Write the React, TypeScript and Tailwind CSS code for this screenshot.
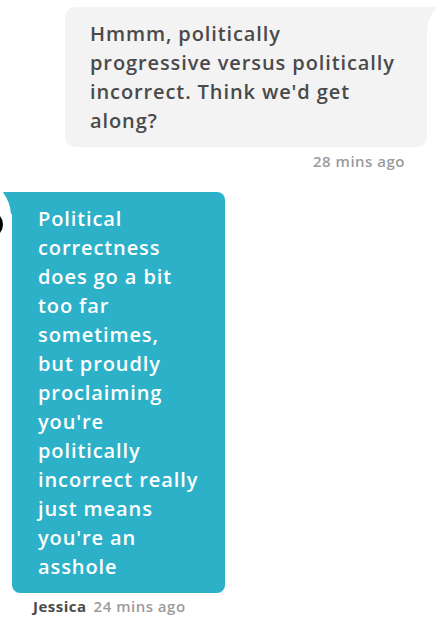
import React from "react";

const grayLines = [
  "Hmmm, politically",
  "progressive versus politically",
  "incorrect. Think we'd get",
  "along?",
];

const tealLines = [
  "Political",
  "correctness",
  "does go a bit",
  "too far",
  "sometimes,",
  "but proudly",
  "proclaiming",
  "you're",
  "politically",
  "incorrect really",
  "just means",
  "you're an",
  "asshole",
];

export default function App() {
  return (
    <div
      className="relative w-[445px] h-[628px] bg-white overflow-hidden"
      style={{ fontFamily: "'Open Sans', 'Noto Sans', sans-serif" }}
    >
      {/* outgoing message */}
      <div className="pt-[7px] pl-[65px]">
        <div className="relative w-[362px] h-[140px] bg-[#f3f3f3] rounded-l-[10px] rounded-br-[10px] pl-[25px] pt-[12px]">
          <svg
            className="absolute right-[-10px] top-0"
            width="12"
            height="22"
            viewBox="0 0 12 22"
          >
            <path d="M0 0 H10 Q11 0 10.5 2 Q3 10 2 22 H0 Z" fill="#f3f3f3" />
          </svg>
          {grayLines.map((l) => (
            <div
              key={l}
              className="whitespace-nowrap text-[20px] leading-[29px] font-semibold tracking-[0.9px] text-[#4a4a4a]"
            >
              {l}
            </div>
          ))}
        </div>
      </div>
      <div className="w-[405px] text-right mt-[4px] text-[15px] leading-[20px] font-semibold tracking-[0.5px] text-[#9b9b9b]">
        28 mins ago
      </div>

      {/* avatar edge */}
      <div className="absolute left-[-24px] top-[211px] w-[27px] h-[27px] rounded-full border-[3px] border-black" />

      {/* incoming message */}
      <div className="pl-[12px] mt-[21px]">
        <div className="relative w-[213px] h-[401px] bg-[#2cb1c8] rounded-r-[8px] rounded-bl-[8px] pl-[26px] pt-[12px]">
          <svg
            className="absolute left-[-9px] top-0"
            width="10"
            height="22"
            viewBox="0 0 10 22"
          >
            <path d="M10 0 H1 Q-0.5 0 1 2 Q7 10 8 22 H10 Z" fill="#2cb1c8" />
          </svg>
          {tealLines.map((l, i) => (
            <div
              key={i}
              className="whitespace-nowrap text-[20px] leading-[29px] font-semibold tracking-[0.9px] text-white"
            >
              {l}
            </div>
          ))}
        </div>
      </div>
      <div className="pl-[33px] mt-[3px] text-[15px] leading-[20px] font-bold tracking-[0.5px]">
        <span className="text-[#4a4a4a]">Jessica</span>
        <span className="ml-[7px] text-[#9b9b9b] font-semibold">24 mins ago</span>
      </div>
    </div>
  );
}
